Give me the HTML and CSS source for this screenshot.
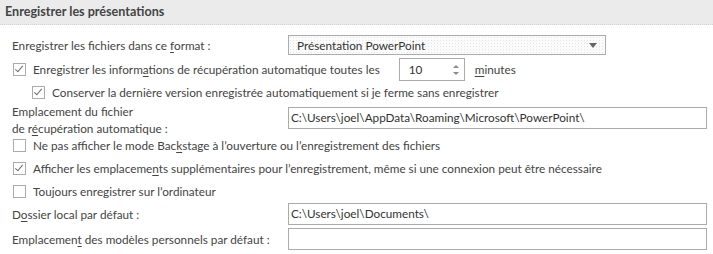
FILE: index.html
```html
<!DOCTYPE html>
<html lang="fr">
<head>
<meta charset="utf-8">
<title>Enregistrer les présentations</title>
<link rel="stylesheet" href="styles.css">
</head>
<body>
<div class="panel">
  <div class="section-head">Enregistrer les présentations</div>
  <div class="rows">
    <div class="row row-format">
      <span class="label">Enregistrer les fichiers dans ce <u>f</u>ormat :</span>
      <div class="select">
        <span>Présentation PowerPoint</span>
        <span class="arrow"></span>
      </div>
    </div>
    <div class="row row-auto">
      <span class="check on"></span>
      <span class="ctext">Enregistrer les inform<u>a</u>tions de récupération automatique toutes les</span>
      <div class="spin">
        <span class="spin-val">10</span>
        <span class="spin-btns"><span class="up"></span><span class="down"></span></span>
      </div>
      <span class="unit"><u>m</u>inutes</span>
    </div>
    <div class="row row-keep">
      <span class="check on"></span>
      <span class="ctext">Conserver la dernière version enregistrée automatiquement si je ferme sans enregistrer</span>
    </div>
    <div class="row row-loc">
      <span class="label two">Emplacement du fichier<br>de r<u>é</u>cupération automatique :</span>
      <div class="field">C:\Users\joel\AppData\Roaming\Microsoft\PowerPoint\</div>
    </div>
    <div class="row row-chk">
      <span class="check"></span>
      <span class="ctext">Ne pas afficher le mode Bac<u>k</u>stage à l’ouverture ou l’enregistrement des fichiers</span>
    </div>
    <div class="row row-chk">
      <span class="check on"></span>
      <span class="ctext">Afficher les emplaceme<u>n</u>ts supplémentaires pour l’enregistrement, même si une connexion peut être nécessaire</span>
    </div>
    <div class="row row-chk">
      <span class="check"></span>
      <span class="ctext">Toujours enregistrer sur l’ordinateur</span>
    </div>
    <div class="row row-field">
      <span class="label">D<u>o</u>ssier local par défaut :</span>
      <div class="field">C:\Users\joel\Documents\</div>
    </div>
    <div class="row row-field">
      <span class="label">Emplacemen<u>t</u> des modèles personnels par défaut :</span>
      <div class="field"></div>
    </div>
  </div>
</div>
</body>
</html>
```

FILE: styles.css
```css
html, body {
  margin: 0;
  padding: 0;
  background: #ffffff;
}

body {
  font-family: Lato, "Noto Sans", sans-serif;
  font-size: 11.75px;
  color: #444444;
}

.panel {
  width: 713px;
  height: 254px;
  overflow: hidden;
}

.section-head {
  height: 24px;
  line-height: 24px;
  padding-left: 5px;
  background: #ebebeb;
  border-bottom: 1px dotted #d4d4d4;
  font-weight: bold;
  font-size: 12.6px;
  color: #444444;
}

.rows {
  display: flex;
  flex-direction: column;
  padding-top: 8px;
}

.row {
  display: flex;
  align-items: center;
  padding-left: 12px;
}

.label {
  width: 276px;
  flex: none;
  white-space: nowrap;
}

.label.two {
  line-height: 17px;
}

u {
  text-decoration-thickness: 1px;
  text-underline-offset: 2px;
}

.row-format {
  height: 24px;
}

.select {
  width: 318px;
  height: 20px;
  border: 1px solid #ababab;
  display: flex;
  align-items: center;
  justify-content: space-between;
  padding: 0 8px 0 8px;
  box-sizing: border-box;
  background-color: #fbfbfb;
  background-image: radial-gradient(circle, #e4e4e4 0.6px, transparent 0.8px);
  background-size: 3px 3px;
  color: #333333;
}

.arrow {
  width: 0;
  height: 0;
  border-left: 4px solid transparent;
  border-right: 4px solid transparent;
  border-top: 5px solid #666666;
  margin-top: 1px;
}

.row-auto {
  height: 25px;
  padding-left: 13px;
}

.check {
  width: 13px;
  height: 13px;
  box-sizing: border-box;
  border: 1px solid #ababab;
  background: #ffffff;
  flex: none;
  margin-right: 7px;
  position: relative;
}

.check.on::after {
  content: "";
  position: absolute;
  left: 3px;
  top: 0px;
  width: 3px;
  height: 7px;
  border-right: 1.5px solid #6d6d6d;
  border-bottom: 1.5px solid #6d6d6d;
  transform: rotate(40deg);
}

.ctext {
  white-space: nowrap;
}

.spin {
  width: 66px;
  height: 23px;
  box-sizing: border-box;
  border: 1px solid #ababab;
  margin-left: 19px;
  display: flex;
  align-items: center;
  justify-content: space-between;
  padding: 0 5px 0 9px;
  color: #333333;
  flex: none;
}

.spin-btns {
  display: flex;
  flex-direction: column;
  gap: 4px;
}

.spin-btns .up {
  width: 0;
  height: 0;
  border-left: 3px solid transparent;
  border-right: 3px solid transparent;
  border-bottom: 3px solid #8a8a8a;
}

.spin-btns .down {
  width: 0;
  height: 0;
  border-left: 3px solid transparent;
  border-right: 3px solid transparent;
  border-top: 3px solid #8a8a8a;
}

.unit {
  margin-left: 10px;
}

.row-keep {
  height: 21px;
  padding-left: 32px;
}

.row-loc {
  height: 31px;
  align-items: flex-start;
}

.field {
  width: 419px;
  height: 22px;
  box-sizing: border-box;
  border: 1px solid #ababab;
  line-height: 20px;
  padding-left: 2px;
  color: #333333;
  white-space: nowrap;
  flex: none;
}

.row-loc .field {
  margin-top: 4px;
}

.row-chk {
  height: 23px;
  padding-left: 13px;
}

.row-field {
  height: 22px;
  margin-bottom: 3px;
}
```
